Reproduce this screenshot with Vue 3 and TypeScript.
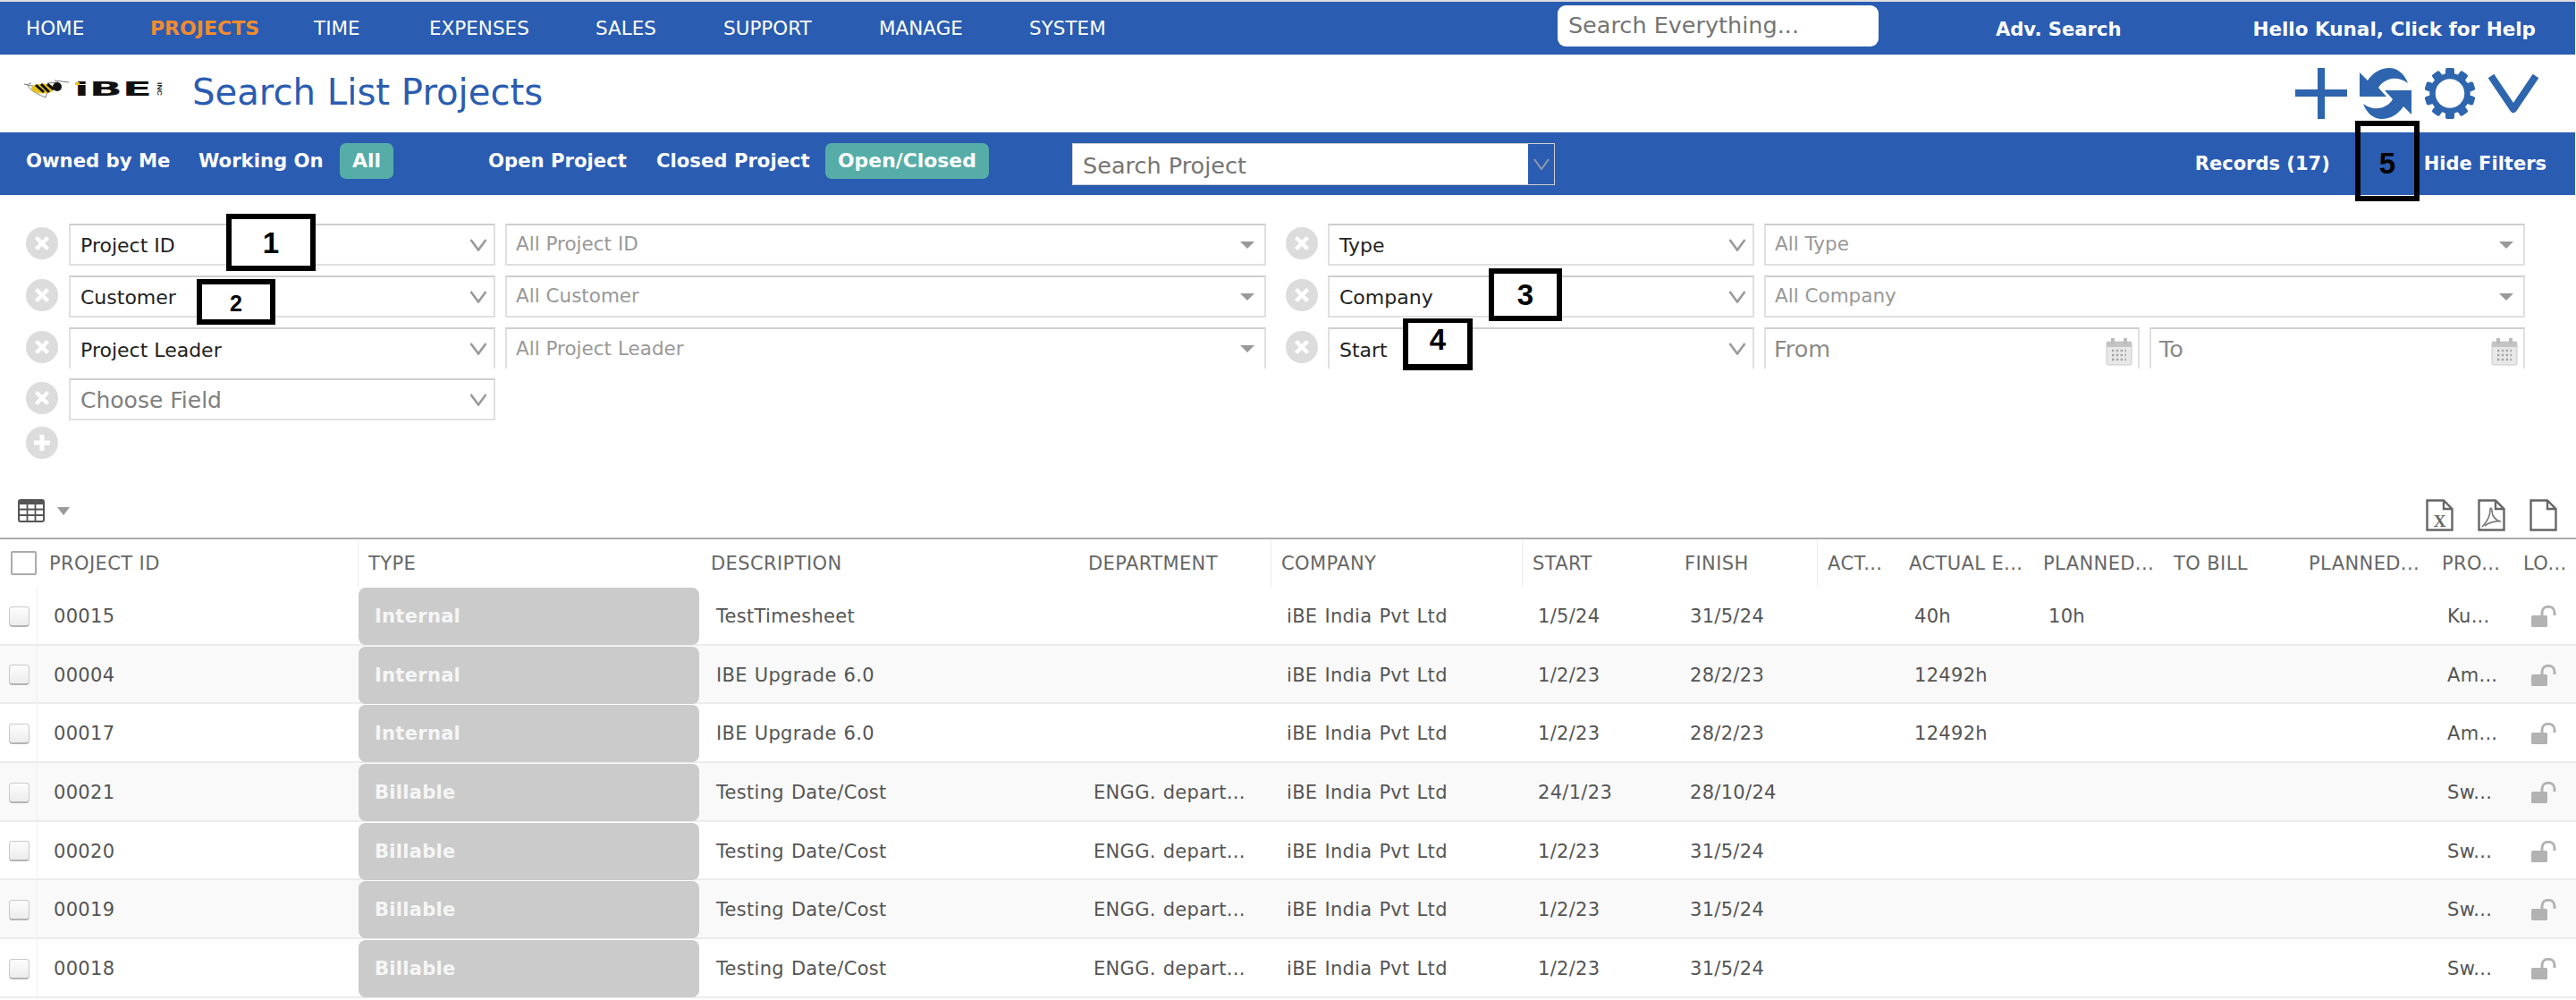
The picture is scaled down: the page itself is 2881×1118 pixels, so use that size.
<template>
  <div class="page">
    <!-- top navigation -->
    <header class="nav">
      <div class="nav-links">
        <span v-for="item in navItems" :key="item" class="nav-link" :class="{ active: item === 'PROJECTS' }">{{ item }}</span>
      </div>
      <div class="nav-right">
        <div class="global-search">Search Everything...</div>
        <span class="adv">Adv. Search</span>
        <span class="hello">Hello Kunal, Click for Help</span>
      </div>
    </header>

    <!-- title row -->
    <section class="title-row">
      <svg class="logo" viewBox="0 -6 163 32" width="163" height="32">
        <path d="M0 5 L14 8 M8 4 C2 4 4 9 10 13 C16 17 22 19 24 20 M24 20 L26 14 M26 4 L38 3 M34 1 L50 3" fill="none" stroke="#777" stroke-width="1" />
        <ellipse cx="21" cy="10" rx="13" ry="5.5" fill="#e6c01e" />
        <path d="M13 6 L22 14 M19 5 L28 14 M26 5 L33 11" stroke="#111" stroke-width="3" fill="none" />
        <ellipse cx="37" cy="8" rx="5" ry="5" fill="#111" />
        <text class="logo-ibe" x="56" y="18" textLength="87" lengthAdjust="spacingAndGlyphs">iBE</text>
        <rect x="57" y="3" width="5" height="3" fill="#e9c31e" />
        <text class="logo-inc" transform="translate(149 3) rotate(90)" textLength="15" lengthAdjust="spacingAndGlyphs">INC</text>
      </svg>
      <h1 class="title">Search List Projects</h1>
      <div class="title-actions">
        <svg class="act-plus" viewBox="0 0 58 57" width="58" height="57">
          <path d="M25 0h8v24h25v8H33v25h-8V32H0v-8h25z" fill="#2e65ae" />
        </svg>
        <svg class="act-refresh" viewBox="0 0 58 57" width="58" height="57">
          <path d="M0 5 L9 14 C15 5 24 0 33 0 C42 0 50 6 54 17 C46 11 38 11 32 13 C27 15 23 18 21 22 L30 32 L0 32 Z" fill="#2e65ae" />
          <path d="M0 5 L9 14 C15 5 24 0 33 0 C42 0 50 6 54 17 C46 11 38 11 32 13 C27 15 23 18 21 22 L30 32 L0 32 Z" fill="#2e65ae" transform="rotate(180 29 28.5)" />
        </svg>
        <svg class="act-gear" viewBox="0 0 58 57" width="58" height="57">
          <rect v-for="a in gearTeeth" :key="a" x="24" y="0" width="10" height="10" rx="2" fill="#2e65ae" :transform="`rotate(${a} 29 28.5)`" />
          <circle cx="29" cy="28.5" r="19.5" fill="none" stroke="#2e65ae" stroke-width="6.5" />
        </svg>
        <svg class="act-chev" viewBox="0 0 56 45" width="56" height="45">
          <path d="M3 3 L28 40 L53 3" fill="none" stroke="#2e65ae" stroke-width="8" stroke-linejoin="round" />
        </svg>
      </div>
    </section>

    <!-- quick filter bar -->
    <section class="bar">
      <span>Owned by Me</span>
      <span>Working On</span>
      <span><b class="pill">All</b></span>
      <span>Open Project</span>
      <span>Closed Project</span>
      <span><b class="pill">Open/Closed</b></span>
      <div class="project-search">
        <span class="project-search-text">Search Project</span>
        <span class="project-search-btn">
          <svg viewBox="0 0 20 14" width="20" height="14"><path d="M2 1 L10 12 L18 1" fill="none" stroke="#8f9aaa" stroke-width="2" /></svg>
        </span>
      </div>
      <div class="bar-right">
        <span>Records (17)</span>
        <span>Hide Filters</span>
      </div>
    </section>

    <!-- filter rows -->
    <section class="filters">
      <div v-for="(f, i) in filters" :key="f.label" class="f-cell" :class="{ even: i % 2 === 1, cut: i === 4 || i === 5 }">
        <span class="clear-slot">
          <svg viewBox="0 0 36 36" width="36" height="36">
            <circle cx="18" cy="18" r="18" fill="#dcdcdc" />
            <path d="M11.5 11.5 L24.5 24.5 M24.5 11.5 L11.5 24.5" stroke="#fff" stroke-width="4.5" />
          </svg>
        </span>
        <div class="f-field" :class="{ empty: f.kind === 'empty' }">
          <span class="f-label">{{ f.label }}</span>
          <svg class="f-chev" viewBox="0 0 20 14" width="20" height="14"><path d="M1.5 1 L10 12.5 L18.5 1" fill="none" stroke="#9a9a9a" stroke-width="2.6" /></svg>
        </div>
        <div v-if="f.kind === 'list'" class="f-value">
          <span>{{ f.ph }}</span>
          <i class="caret"></i>
        </div>
        <div v-else-if="f.kind === 'date'" class="f-dates">
          <div v-for="d in ['From', 'To']" :key="d" class="f-date">
            <span>{{ d }}</span>
            <svg viewBox="0 0 30 32" width="30" height="32">
              <rect x="1" y="5" width="28" height="26" rx="2" fill="#e8e8e8" stroke="#cacaca" />
              <rect x="1" y="5" width="28" height="6" fill="#c4c4c4" />
              <rect x="6" y="1" width="4" height="7" fill="#bcbcbc" />
              <rect x="20" y="1" width="4" height="7" fill="#bcbcbc" />
              <path d="M7 15h16M7 20h16M7 25h16" stroke="#a4a4a4" stroke-width="2.4" stroke-dasharray="2.4 2.4" />
            </svg>
          </div>
        </div>
      </div>
    </section>
    <div class="add-row">
      <svg viewBox="0 0 36 36" width="36" height="36">
        <circle cx="18" cy="18" r="18" fill="#dcdcdc" />
        <path d="M18 9 V27 M9 18 H27" stroke="#fff" stroke-width="5" />
      </svg>
    </div>

    <!-- grid toolbar -->
    <section class="toolbar">
      <div class="grid-btn">
        <svg viewBox="0 0 30 26" width="30" height="26">
          <rect x="1" y="1" width="28" height="24" rx="2" fill="#fff" stroke="#555" stroke-width="2" />
          <rect x="1" y="1" width="28" height="5" fill="#555" />
          <path d="M10.5 5 V25 M19.5 5 V25 M1 11.5 H29 M1 18 H29" stroke="#555" stroke-width="1.8" />
        </svg>
        <i class="caret small"></i>
      </div>
      <div class="exports">
        <svg viewBox="0 0 31 36" width="31" height="36">
          <path d="M1.5 1.5 H20 L29.5 11 V34.5 H1.5 Z M20 1.5 V11 H29.5" fill="none" stroke="#666" stroke-width="2.4" />
          <text class="export-x" x="15.5" y="31" text-anchor="middle">X</text>
        </svg>
        <svg viewBox="0 0 31 36" width="31" height="36">
          <path d="M1.5 1.5 H20 L29.5 11 V34.5 H1.5 Z M20 1.5 V11 H29.5" fill="none" stroke="#666" stroke-width="2.4" />
          <path d="M5 31 C9 27 14 20 14 12 C14 9 16 10 16 13 C16 19 20 24 26 25 C22 24 12 26 8 30" fill="none" stroke="#777" stroke-width="1.6" />
        </svg>
        <svg viewBox="0 0 31 36" width="31" height="36">
          <path d="M1.5 1.5 H20 L29.5 11 V34.5 H1.5 Z M20 1.5 V11 H29.5" fill="none" stroke="#666" stroke-width="2.4" />
        </svg>
      </div>
    </section>

    <!-- table -->
    <section class="table">
      <div class="thead cols">
        <div v-for="(c, i) in columns" :key="i" class="th" :class="{ first: i === 0, sep: c.sep }">
          <span v-if="i === 0" class="head-check"></span>
          <span>{{ c.title }}</span>
        </div>
      </div>
      <div v-for="(r, i) in rows" :key="r.id" class="tr cols" :class="{ alt: i % 2 === 1 }">
        <div class="td check"><span class="row-check"></span></div>
        <div class="td">{{ r.id }}</div>
        <div class="td type"><span class="chip">{{ r.type }}</span></div>
        <div class="td">{{ r.desc }}</div>
        <div class="td">{{ r.dept }}</div>
        <div class="td">{{ r.company }}</div>
        <div class="td">{{ r.start }}</div>
        <div class="td">{{ r.finish }}</div>
        <div class="td"></div>
        <div class="td">{{ r.actual }}</div>
        <div class="td">{{ r.planned }}</div>
        <div class="td"></div>
        <div class="td"></div>
        <div class="td">{{ r.pro }}</div>
        <div class="td lock">
          <svg viewBox="0 0 28 24" width="28" height="24">
            <rect x="0" y="11" width="18" height="13" rx="1.5" fill="#b2b2b2" />
            <path d="M12 12 V8 C12 -1 26 -1 26 8 V11" fill="none" stroke="#b2b2b2" stroke-width="3" />
          </svg>
        </div>
      </div>
    </section>

    <!-- numbered callouts drawn over the screen -->
    <div v-for="n in callouts" :key="n.label" class="callout" :class="n.cls"><span>{{ n.label }}</span></div>
  </div>
</template>

<script setup lang="ts">
const navItems = ['HOME', 'PROJECTS', 'TIME', 'EXPENSES', 'SALES', 'SUPPORT', 'MANAGE', 'SYSTEM']

const gearTeeth = [0, 36, 72, 108, 144, 180, 216, 252, 288, 324]

const filters = [
  { label: 'Project ID', ph: 'All Project ID', kind: 'list' },
  { label: 'Type', ph: 'All Type', kind: 'list' },
  { label: 'Customer', ph: 'All Customer', kind: 'list' },
  { label: 'Company', ph: 'All Company', kind: 'list' },
  { label: 'Project Leader', ph: 'All Project Leader', kind: 'list' },
  { label: 'Start', ph: '', kind: 'date' },
  { label: 'Choose Field', ph: '', kind: 'empty' },
]

const columns = [
  { title: 'PROJECT ID', sep: false },
  { title: 'TYPE', sep: true },
  { title: 'DESCRIPTION', sep: false },
  { title: 'DEPARTMENT', sep: false },
  { title: 'COMPANY', sep: true },
  { title: 'START', sep: true },
  { title: 'FINISH', sep: false },
  { title: 'ACT...', sep: true },
  { title: 'ACTUAL E...', sep: false },
  { title: 'PLANNED...', sep: false },
  { title: 'TO BILL', sep: false },
  { title: 'PLANNED...', sep: false },
  { title: 'PRO...', sep: false },
  { title: 'LO...', sep: false },
]

const company = 'iBE India Pvt Ltd'
const dept = 'ENGG. depart...'
const rows = [
  { id: '00015', type: 'Internal', desc: 'TestTimesheet', dept: '', company, start: '1/5/24', finish: '31/5/24', actual: '40h', planned: '10h', pro: 'Ku...' },
  { id: '00004', type: 'Internal', desc: 'IBE Upgrade 6.0', dept: '', company, start: '1/2/23', finish: '28/2/23', actual: '12492h', planned: '', pro: 'Am...' },
  { id: '00017', type: 'Internal', desc: 'IBE Upgrade 6.0', dept: '', company, start: '1/2/23', finish: '28/2/23', actual: '12492h', planned: '', pro: 'Am...' },
  { id: '00021', type: 'Billable', desc: 'Testing Date/Cost', dept, company, start: '24/1/23', finish: '28/10/24', actual: '', planned: '', pro: 'Sw...' },
  { id: '00020', type: 'Billable', desc: 'Testing Date/Cost', dept, company, start: '1/2/23', finish: '31/5/24', actual: '', planned: '', pro: 'Sw...' },
  { id: '00019', type: 'Billable', desc: 'Testing Date/Cost', dept, company, start: '1/2/23', finish: '31/5/24', actual: '', planned: '', pro: 'Sw...' },
  { id: '00018', type: 'Billable', desc: 'Testing Date/Cost', dept, company, start: '1/2/23', finish: '31/5/24', actual: '', planned: '', pro: 'Sw...' },
]

const callouts = [
  { label: '1', cls: 'c1' },
  { label: '2', cls: 'c2' },
  { label: '3', cls: 'c3' },
  { label: '4', cls: 'c4' },
  { label: '5', cls: 'c5' },
]
</script>

<style>
html, body {
  margin: 0;
  background: #fff;
}
</style>

<style scoped>
.page {
  position: relative;
  width: 2881px;
  height: 1118px;
  overflow: hidden;
  box-sizing: border-box;
  border-top: 2px solid #dedede;
  background: #fff;
  font-family: "DejaVu Sans", Verdana, sans-serif;
  color: #555;
}

/* nav */
.nav {
  display: flex;
  align-items: center;
  height: 59px;
  margin-right: 1px;
  background: #2a5cb2;
  color: #fff;
}
.nav-links {
  display: grid;
  grid-template-columns: 139px 183px 129px 186px 143px 174px 168px auto;
  padding-left: 29px;
  font-size: 21.5px;
}
.nav-link.active {
  color: #f28c2e;
  font-weight: 700;
  font-size: 22px;
}
.nav-right {
  display: flex;
  align-items: center;
  margin-left: auto;
  padding-right: 44px;
  font-size: 21.1px;
  font-weight: 700;
}
.global-search {
  box-sizing: border-box;
  width: 359px;
  height: 46px;
  margin-top: -5px;
  margin-right: 131px;
  padding: 7px 12px 0;
  border-radius: 9px;
  background: #fff;
  color: #757575;
  font-size: 25.5px;
  font-weight: 400;
  white-space: nowrap;
}
.adv {
  margin-right: 147px;
  padding-top: 2px;
}
.hello {
  padding-top: 2px;
  font-size: 21.5px;
}

/* title row */
.title-row {
  display: flex;
  align-items: center;
  height: 87px;
  padding-left: 27px;
}
.logo {
  margin-top: -11px;
  flex: none;
}
.logo-ibe {
  font-family: "DejaVu Sans", sans-serif;
  font-weight: 700;
  font-size: 21px;
  fill: #111;
}
.logo-inc {
  font-family: "Liberation Sans", sans-serif;
  font-weight: 700;
  font-size: 8px;
  fill: #222;
}
.title {
  margin: -3px 0 0 25px;
  color: #2a5cb2;
  font-size: 40.2px;
  font-weight: 400;
}
.title-actions {
  display: flex;
  align-items: flex-start;
  gap: 14px;
  margin-left: auto;
  padding: 15px 42px 0 0;
  align-self: flex-start;
}
.act-chev {
  margin-top: 6px;
}

/* quick filter bar */
.bar {
  display: grid;
  grid-template-columns: 193px 158px 166px 188px 189px 276px 540px 1fr;
  align-items: start;
  height: 70px;
  margin-right: 1px;
  padding: 12px 0 0 29px;
  box-sizing: border-box;
  background: #2a5cb2;
  color: #fff;
  font-size: 21.2px;
  font-weight: 700;
  line-height: 40px;
}
.pill {
  display: inline-block;
  height: 40px;
  padding: 0 14px;
  border-radius: 7px;
  background: #56ada8;
  font-size: 21.9px;
}
.project-search {
  display: flex;
  box-sizing: border-box;
  width: 540px;
  height: 47px;
  border: 1px solid #cfcfcf;
  background: #fff;
}
.project-search-text {
  flex: 1;
  padding: 4px 0 0 11px;
  color: #757575;
  font-size: 25.5px;
  font-weight: 400;
}
.project-search-btn {
  display: flex;
  align-items: center;
  justify-content: center;
  width: 29px;
  background: #2a5cb2;
}
.bar-right {
  display: flex;
  justify-content: flex-end;
  gap: 105px;
  padding-right: 32px;
  line-height: 46px;
  font-size: 21px;
}

/* filter rows */
.filters {
  display: grid;
  grid-template-columns: 1387px 1386px;
  column-gap: 22px;
  row-gap: 11px;
  padding: 32px 0 0 29px;
}
.f-cell {
  display: flex;
  gap: 11px;
  height: 47px;
}
.f-cell.cut {
  height: 46px;
}
.clear-slot {
  flex: 0 0 37px;
  padding-top: 4px;
}
.f-cell.even .clear-slot {
  flex-basis: 36px;
}
.f-field,
.f-value,
.f-date {
  display: flex;
  align-items: center;
  justify-content: space-between;
  box-sizing: border-box;
  border: 2px solid #e0e0e0;
  border-top-color: #cecece;
  background: #fff;
}
.f-cell.cut .f-field,
.f-cell.cut .f-value,
.f-cell.cut .f-date {
  border-bottom: 0;
}
.f-field {
  flex: 0 0 477px;
  padding: 0 7px 0 11px;
  color: #222;
  font-size: 22px;
}
.f-label {
  padding-top: 2px;
}
.f-field.empty {
  color: #808080;
  font-size: 25px;
}
.f-value {
  flex: 1;
  padding: 0 11px 0 10px;
  color: #999;
  font-size: 21.5px;
}
.f-value span {
  margin-top: -2px;
}
.caret {
  width: 0;
  height: 0;
  border-left: 8px solid transparent;
  border-right: 8px solid transparent;
  border-top: 8px solid #999;
}
.caret.small {
  border-left-width: 7px;
  border-right-width: 7px;
  border-top-width: 9px;
}
.f-dates {
  flex: 1;
  display: flex;
  gap: 11px;
}
.f-date {
  flex: 1;
  padding: 0 6px 0 9px;
  color: #8a8a8a;
  font-size: 25.5px;
}
.f-date svg {
  margin-top: 6px;
}
.add-row {
  height: 36px;
  padding: 7px 0 0 29px;
}
.add-row svg {
  display: block;
}

/* toolbar above table */
.toolbar {
  display: flex;
  justify-content: space-between;
  align-items: flex-start;
  height: 43px;
  margin-top: 45px;
  padding: 0 21px 0 20px;
}
.grid-btn {
  display: flex;
  align-items: center;
  gap: 14px;
}
.exports {
  display: flex;
  gap: 27px;
}
.export-x {
  font-family: "Liberation Serif", serif;
  font-weight: 700;
  font-size: 19px;
  fill: #666;
}

/* table */
.table {
  border-top: 2px solid #adadad;
}
.cols {
  display: grid;
  grid-template-columns: 42px 358px 383px 422px 216px 281px 170px 160px 91px 150px 146px 151px 149px 91px 71px;
}
.thead {
  height: 53px;
  color: #666;
  font-size: 21px;
  letter-spacing: 0.4px;
}
.th {
  display: flex;
  align-items: center;
  padding-left: 11px;
  white-space: nowrap;
  border-left: 1px solid transparent;
}
.th.first {
  grid-column: 1 / span 2;
  gap: 14px;
}
.th.sep {
  border-left-color: #ececec;
}
.head-check {
  box-sizing: border-box;
  width: 29px;
  height: 27px;
  border: 2px solid #ababab;
  border-radius: 2px;
  background: #fff;
}
.tr {
  height: 65.7px;
  box-sizing: border-box;
  border-bottom: 2px solid #ececec;
  background: #fff;
  font-size: 21px;
  letter-spacing: 0.3px;
  word-spacing: 1px;
}
.tr.alt {
  background: #f9f9f9;
}
.td {
  display: flex;
  align-items: center;
  padding-left: 18px;
  padding-top: 1px;
  white-space: nowrap;
  overflow: hidden;
}
.td.check {
  padding-left: 10px;
  border-right: 1px solid #efefef;
}
.row-check {
  box-sizing: border-box;
  width: 23px;
  height: 23px;
  border: 1px solid #c9c9c9;
  border-bottom: 2px solid #b4b4b4;
  border-radius: 4px;
  background: linear-gradient(#fdfdfd, #ececec);
}
.td.type {
  padding: 1px;
  overflow: visible;
}
.chip {
  display: flex;
  align-items: center;
  width: 100%;
  height: 64px;
  margin-bottom: -1px;
  box-sizing: border-box;
  padding-left: 18px;
  border-radius: 8px;
  background: #cbcbcb;
  color: #f6f6f6;
  font-weight: 700;
  font-size: 21px;
}
.td.lock {
  padding-left: 21px;
}

/* numbered callouts */
.callout {
  position: absolute;
  display: flex;
  align-items: center;
  justify-content: center;
  box-sizing: border-box;
  border: 6px solid #000;
  background: #fff;
  color: #000;
  font-family: "Liberation Sans", sans-serif;
  font-size: 33px;
  font-weight: 700;
}
.c1 { left: 253px; top: 237px; width: 100px; height: 64px; padding-top: 2px; }
.c2 { left: 220px; top: 310px; width: 88px; height: 51px; font-size: 25px; padding-top: 4px; }
.c3 { left: 1665px; top: 298px; width: 82px; height: 59px; }
.c4 { left: 1569px; top: 354px; width: 78px; height: 58px; border-top-width: 5px; border-bottom-width: 7px; padding-bottom: 8px; }
.c5 { left: 2634px; top: 133px; width: 72px; height: 90px; background: transparent; padding-top: 5px; }
</style>
